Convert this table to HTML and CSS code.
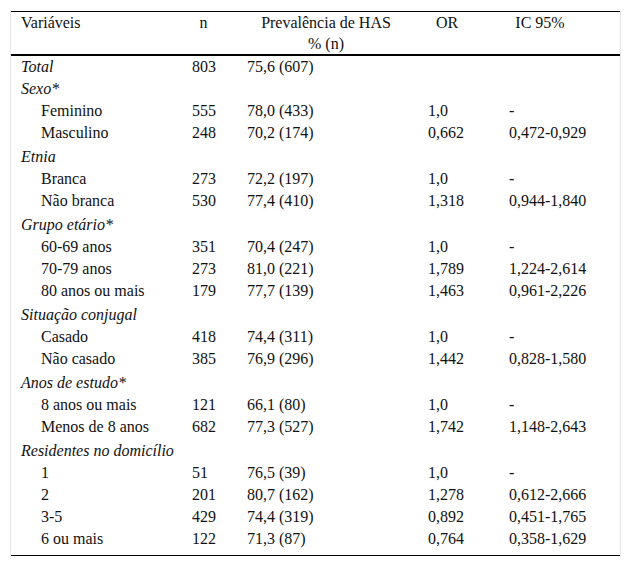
FILE: index.html
```html
<!DOCTYPE html>
<html lang="pt">
<head>
<meta charset="utf-8">
<title>Prevalência de HAS</title>
<link rel="stylesheet" href="styles.css">
</head>
<body>
<div class="frame">
  <div class="table">
    <div class="row head">
      <div class="c c1">Variáveis</div>
      <div class="c c2"><span class="h h2">n</span></div>
      <div class="c c3"><span class="h h3">Prevalência de HAS<br>% (n)</span></div>
      <div class="c c4"><span class="h h4">OR</span></div>
      <div class="c c5"><span class="h h5">IC 95%</span></div>
    </div>
    <div class="body">
      <div class="row"><div class="c c1 it">Total</div><div class="c">803</div><div class="c">75,6 (607)</div><div class="c"></div><div class="c"></div></div>
      <div class="row"><div class="c c1 it">Sexo*</div></div>
      <div class="row"><div class="c c1 sub">Feminino</div><div class="c">555</div><div class="c">78,0 (433)</div><div class="c">1,0</div><div class="c">-</div></div>
      <div class="row"><div class="c c1 sub">Masculino</div><div class="c">248</div><div class="c">70,2 (174)</div><div class="c">0,662</div><div class="c">0,472-0,929</div></div>
      <div class="row grp"><div class="c c1 it">Etnia</div></div>
      <div class="row"><div class="c c1 sub">Branca</div><div class="c">273</div><div class="c">72,2 (197)</div><div class="c">1,0</div><div class="c">-</div></div>
      <div class="row"><div class="c c1 sub">Não branca</div><div class="c">530</div><div class="c">77,4 (410)</div><div class="c">1,318</div><div class="c">0,944-1,840</div></div>
      <div class="row grp"><div class="c c1 it">Grupo etário*</div></div>
      <div class="row"><div class="c c1 sub">60-69 anos</div><div class="c">351</div><div class="c">70,4 (247)</div><div class="c">1,0</div><div class="c">-</div></div>
      <div class="row"><div class="c c1 sub">70-79 anos</div><div class="c">273</div><div class="c">81,0 (221)</div><div class="c">1,789</div><div class="c">1,224-2,614</div></div>
      <div class="row"><div class="c c1 sub">80 anos ou mais</div><div class="c">179</div><div class="c">77,7 (139)</div><div class="c">1,463</div><div class="c">0,961-2,226</div></div>
      <div class="row grp"><div class="c c1 it">Situação conjugal</div></div>
      <div class="row"><div class="c c1 sub">Casado</div><div class="c">418</div><div class="c">74,4 (311)</div><div class="c">1,0</div><div class="c">-</div></div>
      <div class="row"><div class="c c1 sub">Não casado</div><div class="c">385</div><div class="c">76,9 (296)</div><div class="c">1,442</div><div class="c">0,828-1,580</div></div>
      <div class="row grp"><div class="c c1 it">Anos de estudo*</div></div>
      <div class="row"><div class="c c1 sub">8 anos ou mais</div><div class="c">121</div><div class="c">66,1 (80)</div><div class="c">1,0</div><div class="c">-</div></div>
      <div class="row"><div class="c c1 sub">Menos de 8 anos</div><div class="c">682</div><div class="c">77,3 (527)</div><div class="c">1,742</div><div class="c">1,148-2,643</div></div>
      <div class="row grp"><div class="c c1 it">Residentes no domicílio</div></div>
      <div class="row"><div class="c c1 sub">1</div><div class="c">51</div><div class="c">76,5 (39)</div><div class="c">1,0</div><div class="c">-</div></div>
      <div class="row"><div class="c c1 sub">2</div><div class="c">201</div><div class="c">80,7 (162)</div><div class="c">1,278</div><div class="c">0,612-2,666</div></div>
      <div class="row"><div class="c c1 sub">3-5</div><div class="c">429</div><div class="c">74,4 (319)</div><div class="c">0,892</div><div class="c">0,451-1,765</div></div>
      <div class="row"><div class="c c1 sub">6 ou mais</div><div class="c">122</div><div class="c">71,3 (87)</div><div class="c">0,764</div><div class="c">0,358-1,629</div></div>
    </div>
  </div>
</div>
</body>
</html>
```

FILE: styles.css
```css
html, body {
  margin: 0;
  padding: 0;
  background: #ffffff;
}

body {
  font-family: "Liberation Serif", "Times New Roman", serif;
  font-size: 16px;
  color: #111111;
}

.frame {
  margin: 10px 0 0 10px;
  width: 609px;
  padding-top: 1px;
  border-left: 1px solid #e6e6e6;
  border-right: 1px solid #e6e6e6;
}

.table {
  border-top: 1px solid #000000;
  border-bottom: 1px solid #000000;
}

.row {
  display: grid;
  grid-template-columns: 173px 55px 181px 81px 118px;
  height: 22px;
  line-height: 22px;
  white-space: nowrap;
}

.row.grp {
  height: 24px;
  padding-top: 2px;
  box-sizing: border-box;
}

.row.head {
  height: auto;
  line-height: 21px;
  border-bottom: 2px solid #000000;
}

.body {
  padding-bottom: 5px;
}

.c {
  padding-left: 8px;
}

.c1 {
  padding-left: 10px;
}

.c1.sub {
  padding-left: 30px;
}

.it {
  font-style: italic;
}

.h {
  display: inline-block;
  text-align: center;
}

.h2 { width: 23px; }
.h3 { width: 158px; }
.h4 { width: 38px; }
.h5 { width: 62px; }
```
